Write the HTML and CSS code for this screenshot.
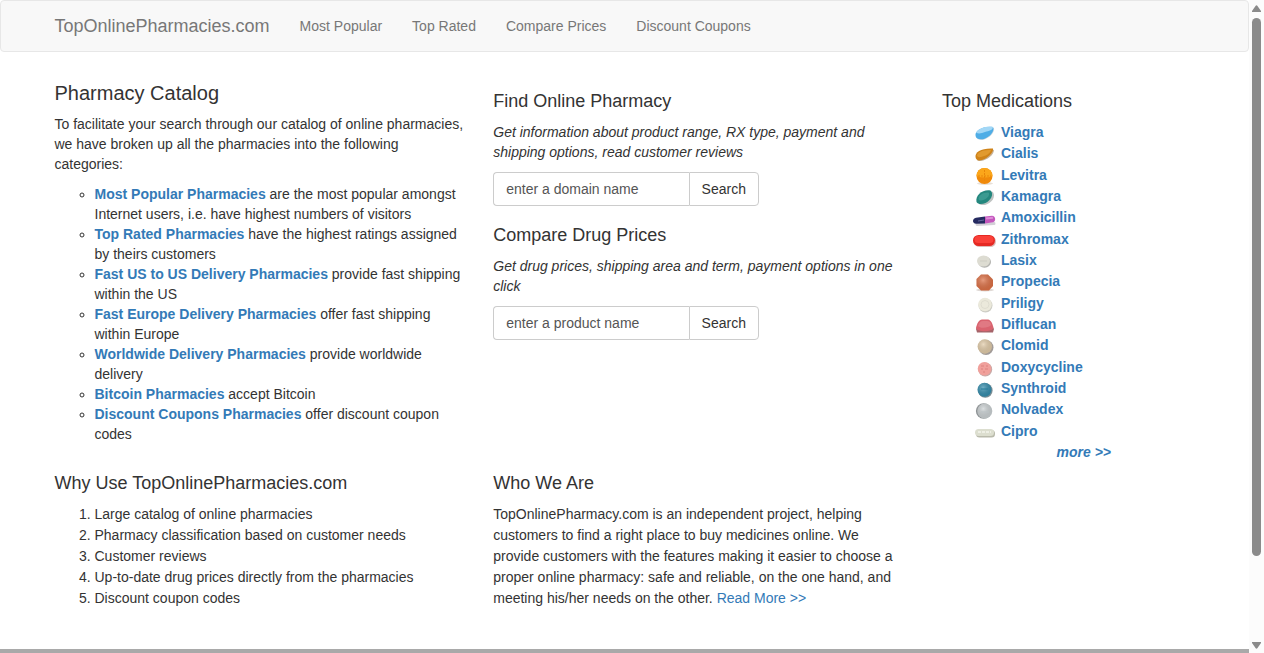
FILE: index.html
```
<!DOCTYPE html>
<html lang="en">
<head>
<meta charset="utf-8">
<title>TopOnlinePharmacies.com</title>
<link rel="stylesheet" href="styles.css">
</head>
<body>

<div class="page">
  <nav class="navbar">
    <div class="container nav-inner">
      <a class="brand" href="#">TopOnlinePharmacies.com</a>
      <a href="#">Most Popular</a>
      <a href="#">Top Rated</a>
      <a href="#">Compare Prices</a>
      <a href="#">Discount Coupons</a>
    </div>
  </nav>

  <main class="container content">
    <section class="col catalog">
      <h1>Pharmacy Catalog</h1>
      <p>To facilitate your search through our catalog of online pharmacies, we have broken up all the pharmacies into the following categories:</p>
      <ul class="categories">
        <li><a href="#">Most Popular Pharmacies</a> are the most popular amongst Internet users, i.e. have highest numbers of visitors</li>
        <li><a href="#">Top Rated Pharmacies</a> have the highest ratings assigned by theirs customers</li>
        <li><a href="#">Fast US to US Delivery Pharmacies</a> provide fast shipping within the US</li>
        <li><a href="#">Fast Europe Delivery Pharmacies</a> offer fast shipping within Europe</li>
        <li><a href="#">Worldwide Delivery Pharmacies</a> provide worldwide delivery</li>
        <li><a href="#">Bitcoin Pharmacies</a> accept Bitcoin</li>
        <li><a href="#">Discount Coupons Pharmacies</a> offer discount coupon codes</li>
      </ul>
    </section>

    <section class="col">
      <h2><label for="domain">Find Online Pharmacy</label></h2>
      <p><em>Get information about product range, RX type, payment and shipping options, read customer reviews</em></p>
      <form class="search">
        <input type="text" id="domain" placeholder="enter a domain name">
        <button type="button">Search</button>
      </form>

      <h2><label for="product">Compare Drug Prices</label></h2>
      <p><em>Get drug prices, shipping area and term, payment options in one click</em></p>
      <form class="search">
        <input type="text" id="product" placeholder="enter a product name">
        <button type="button">Search</button>
      </form>
    </section>

    <aside class="col medications">
      <h2>Top Medications</h2>
      <ul class="med-list">
        <li>
          <svg viewBox="0 0 24 21">
            <defs>
              <!-- shared highlight for the pills -->
              <radialGradient id="shine" cx=".4" cy=".35" r=".65">
                <stop offset="0" stop-color="#fff" stop-opacity=".3"/>
                <stop offset="1" stop-color="#000" stop-opacity=".1"/>
              </radialGradient>
            </defs>
            <path d="M3 14C4 9 13 4 21 6c1 4-4 10-11 12-4 0-7-1-7-4z" fill="#cfd9e0"/><path d="M2.500 13C2 9 10 3.500 20 5c2 4-3 10-9 12-4 1-8.500 0-8.500-4z" fill="#4fade6"/><path d="M3 10.500C6 6 13 4 20 5c0 3-4 4-8 5-3 .7-6 2.500-9 .5z" fill="#a2d7f6"/>
          </svg>
          <a href="#">Viagra</a>
        </li>
        <li>
          <svg viewBox="0 0 24 21"><path d="M4 16C3 11 12 5 21 7c0 5-7 10-13 11-3 0-4 0-4-2z" fill="#c8b49b"/><path d="M2.500 14C2 9 8 5 20 5.500c1 4-6 10-11 11.500-4 1-6 0-6.500-3z" fill="#cf8319"/><path d="M4 12c2-4 7-5 14-5-1 4-6 6-10 7-3 .5-4-.5-4-2z" fill="#e19a2f"/></svg>
          <a href="#">Cialis</a>
        </li>
        <li>
          <svg viewBox="0 0 24 21"><ellipse cx="12" cy="18.500" rx="8" ry="1.500" fill="#e8e0d8"/><circle cx="11.500" cy="11" r="8" fill="#f08a0a"/><path d="M3.500 11a8 8 0 0 1 16 0q-8 3-16 0z" fill="#fba61a"/><path d="M11.500 5v12M5 11h13" stroke="#e98709" stroke-dasharray="2 1"/></svg>
          <a href="#">Levitra</a>
        </li>
        <li>
          <svg viewBox="0 0 24 21"><path d="M6 18C4 10 13 4 20 6c3 5-1 11-8 13-3 0-5 0-6-1z" fill="#bfc3c2"/><path d="M3.500 16C2 9 10 3 17.500 4.500c4 4 0 10-5 12.500-3 1-7 2-9-1z" fill="#24877e"/><path d="M5.500 13c0-4 5-7 10-6.500 2 2-1 6-4 7-3 1-5 2-6-.5z" fill="#3b9a91"/></svg>
          <a href="#">Kamagra</a>
        </li>
        <li>
          <svg viewBox="0 0 24 21"><path d="M4 17.500l17-1" stroke="#d3d0d7" stroke-width="3" stroke-linecap="round"/><path d="M12 9.500l7-.8c4 0 4 6 1 6.500l-8 1.300z" fill="#c457bd"/><path d="M12 9.500l-9 1.300c-4 1-4 5.700 0 6l9-.3z" fill="#252a60"/><path d="M5 14l6-1" stroke="#646a9e"/><path d="M13 11.500l7-.8" stroke="#dd8dd8" stroke-width="2"/></svg>
          <a href="#">Amoxicillin</a>
        </li>
        <li>
          <svg viewBox="0 0 24 21"><rect x="1" y="7" width="22" height="11" rx="5.500" fill="#dcbbb8"/><rect x="0" y="6" width="22" height="11" rx="5.500" fill="#e52923"/><rect x="1.500" y="7" width="19" height="7" rx="3.500" fill="#fa4039"/></svg>
          <a href="#">Zithromax</a>
        </li>
        <li>
          <svg viewBox="0 0 24 21"><ellipse cx="11.500" cy="12" rx="6.500" ry="5.800" fill="#b4b4b0"/><ellipse cx="10.500" cy="11" rx="6.500" ry="5.500" fill="#dddcd2"/><path d="M7 11h7" stroke="#cecdc3"/></svg>
          <a href="#">Lasix</a>
        </li>
        <li>
          <svg viewBox="0 0 24 21"><ellipse cx="12" cy="19" rx="9" ry="1.500" fill="#dfd9d5"/><path d="M8 3.500h7l5 5v6.500l-4 4.500H8l-4.500-4.500V8z" fill="#de7146"/><path d="M8 3.500h7l5 5v6.500l-4 4.500H8l-4.500-4.500V8z" fill="url(#shine)"/></svg>
          <a href="#">Propecia</a>
        </li>
        <li>
          <svg viewBox="0 0 24 21"><circle cx="12.500" cy="12.500" r="7" fill="#cdcdc5"/><circle cx="12" cy="11.500" r="6.800" fill="#ebe9db"/><circle cx="12" cy="11.500" r="4" fill="none" stroke="#dfddd0"/></svg>
          <a href="#">Priligy</a>
        </li>
        <li>
          <svg viewBox="0 0 24 21"><path d="M3 15l4-8h9l5 8-1 3.500H4z" fill="#a5646a"/><path d="M3 14c1-5 3-8 6-8.500h6c3 .5 4.500 4 5.500 8.500-1 4-16 4.500-17.500 0z" fill="#d9636f"/><path d="M5 12c1-3 2-5 5-5h4c3 0 4 2 4 4-2 3-11 4-13 1z" fill="#e07983"/></svg>
          <a href="#">Diflucan</a>
        </li>
        <li>
          <svg viewBox="0 0 24 21"><circle cx="13" cy="12.500" r="7.500" fill="#a19b98"/><circle cx="11.800" cy="11.500" r="7.200" fill="#e2cca9"/><circle cx="11.800" cy="11.500" r="7.200" fill="url(#shine)"/></svg>
          <a href="#">Clomid</a>
        </li>
        <li>
          <svg viewBox="0 0 24 21"><circle cx="12.200" cy="12.500" r="7" fill="#c7aaa8"/><circle cx="11.500" cy="11.700" r="6.800" fill="#f0a09b"/><path d="M8 9h3m2 0h2m-7 3h2m2 0h3m-5 3h2" stroke="#dc827e"/></svg>
          <a href="#">Doxycycline</a>
        </li>
        <li>
          <svg viewBox="0 0 24 21"><circle cx="12.300" cy="12.500" r="7.300" fill="#7c8d94"/><circle cx="11.500" cy="11.700" r="7" fill="#358eae"/><circle cx="11.500" cy="11.700" r="7" fill="url(#shine)"/><path d="M8 11h7" stroke="#277c9b"/></svg>
          <a href="#">Synthroid</a>
        </li>
        <li>
          <svg viewBox="0 0 24 21"><circle cx="10.700" cy="12" r="7.800" fill="#8f9496"/><circle cx="11.800" cy="12" r="7.500" fill="#ccd2d4"/><circle cx="11.800" cy="12" r="7.500" fill="url(#shine)"/><path d="M8 13h8" stroke="#bbc2c5"/></svg>
          <a href="#">Nolvadex</a>
        </li>
        <li>
          <svg viewBox="0 0 24 21"><rect x="3" y="9" width="19" height="7.500" rx="3.500" fill="#b9baab"/><rect x="2" y="8" width="19" height="7" rx="3.500" fill="#dcdecf"/><path d="M5 11h13" stroke="#eeefe5" stroke-width="2" stroke-dasharray="3 1"/></svg>
          <a href="#">Cipro</a>
        </li>
      </ul>
      <a class="more" href="#">more &gt;&gt;</a>
    </aside>

    <section class="col about">
      <h2>Why Use TopOnlinePharmacies.com</h2>
      <ol>
        <li>Large catalog of online pharmacies</li>
        <li>Pharmacy classification based on customer needs</li>
        <li>Customer reviews</li>
        <li>Up-to-date drug prices directly from the pharmacies</li>
        <li>Discount coupon codes</li>
      </ol>
    </section>

    <section class="col about">
      <h2>Who We Are</h2>
      <p>TopOnlinePharmacy.com is an independent project, helping customers to find a right place to buy medicines online. We provide customers with the features making it easier to choose a proper online pharmacy: safe and reliable, on the one hand, and meeting his/her needs on the other. <a href="#">Read More &gt;&gt;</a></p>
    </section>
  </main>

  <footer class="footer"></footer>
</div>

<div class="scrollbar" aria-hidden="true">
  <svg viewBox="0 0 9 7"><path d="M3.500 1q1-1.500 2 0L9 6v1H0V6z"/></svg>
  <div class="track"><div class="thumb"></div></div>
  <svg viewBox="0 0 9 7"><path d="M3.500 6q1 1.500 2 0L9 1V0H0v1z"/></svg>
</div>

</body>
</html>
```

FILE: styles.css
```
* {
  box-sizing: border-box;
}

body {
  display: flex;
  height: 100vh;
  margin: 0;
  overflow: hidden;
  font-family: "Liberation Sans", Arial, sans-serif;
  font-size: 14px;
  line-height: 20px;
  color: #333;
  background-color: #fff;
}

a {
  color: #337ab7;
  text-decoration: none;
}

a:hover {
  text-decoration: underline;
}

h1, h2 {
  margin: 20px 0 12px;
  font-size: 18px;
  font-weight: 500;
  line-height: 18px;
}

h1 {
  margin: 10px 0;
  font-size: 20px;
  line-height: 22px;
}

p, ul, ol {
  margin: 0 0 10px;
}

.page {
  flex: 1;
  display: flex;
  flex-direction: column;
  overflow: hidden;
}

.container {
  width: 100%;
  max-width: 1170px;
  margin: 0 auto;
}

/* Navigation */
.navbar {
  flex: none;
  margin-bottom: 20px;
  border: 1px solid #e7e7e7;
  border-radius: 4px;
  background-color: #f8f8f8;
}

.nav-inner {
  display: flex;
}

.navbar a {
  padding: 15px;
  color: #777;
}

.navbar .brand {
  font-size: 18px;
}

/* Main columns */
.content {
  display: grid;
  grid-template-columns: 3fr 3fr 2fr;
  padding-bottom: 30px;
}

.col {
  padding: 0 15px;
}

.categories {
  padding-left: 40px;
  list-style-type: circle;
}

.categories a,
.medications a {
  font-weight: bold;
}

.about {
  line-height: 21px;
}

/* Search boxes */
.search {
  display: flex;
  width: 65%;
}

.search input,
.search button {
  height: 34px;
  padding: 6px 12px;
  border: 1px solid #ccc;
  font: inherit;
  background-color: #fff;
}

.search input {
  flex: 1;
  min-width: 0;
  border-right: 0;
  border-radius: 4px 0 0 4px;
  color: #555;
}

.search input::placeholder {
  color: #555;
  opacity: 1;
}

.search button {
  border-radius: 0 4px 4px 0;
  color: #333;
  cursor: pointer;
}

/* Medications */
.medications {
  grid-row: span 2;
  padding-left: 25px;
}

.med-list {
  display: grid;
  grid-auto-rows: 1fr;
  height: 320px;
  margin: 0;
  padding-left: 31px;
  list-style: none;
}

.med-list li {
  display: flex;
  gap: 4px;
}

.med-list svg {
  width: 24px;
  height: 21px;
}

.more {
  display: block;
  width: 169px;
  text-align: right;
  font-style: italic;
}

.footer {
  flex: 1;
  background-color: #a9a9a9;
}

/* Scrollbar */
.scrollbar {
  display: flex;
  flex-direction: column;
  width: 15px;
  padding: 5px 3px 4px;
  background-color: #fcfcfc;
}

.scrollbar svg {
  width: 9px;
  height: 7px;
  fill: #8b8b8b;
}

.track {
  flex: 1;
  margin: 6px 0;
}

.thumb {
  height: 87%;
  border-radius: 5px;
  background-color: #8b8b8b;
}
```
